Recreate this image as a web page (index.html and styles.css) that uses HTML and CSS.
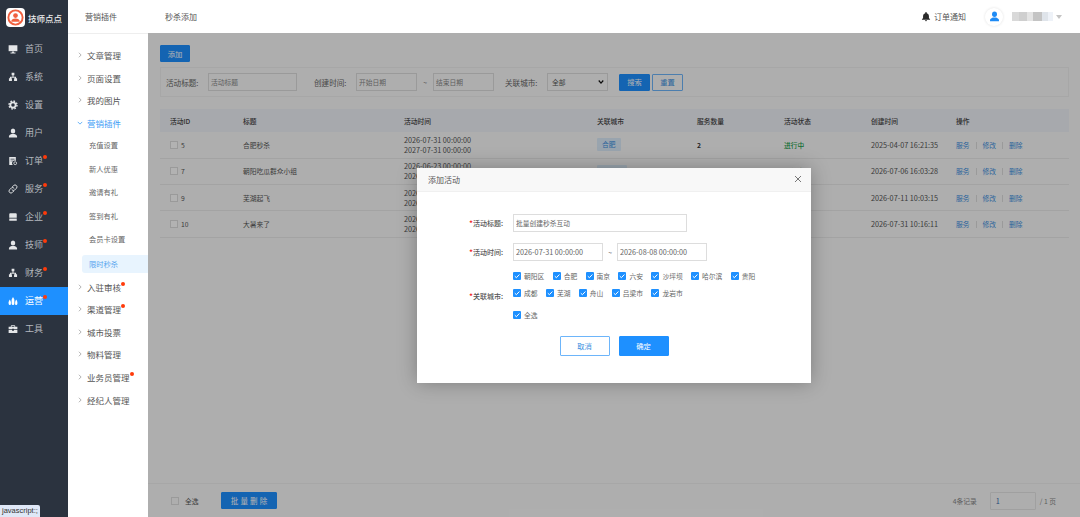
FILE: index.html
```html
<!DOCTYPE html>
<html lang="zh-CN">
<head>
  <meta charset="UTF-8" />
  <title>秒杀添加</title>
  <link rel="stylesheet" href="styles.css">
</head>
<body>
  <svg class="sprite" xmlns="http://www.w3.org/2000/svg">
    <symbol id="i-monitor" viewBox="0 0 16 16"><path d="M1 2h14v9.500H1z"/><path d="M6.500 12h3v1.500H12V15H4v-1.500h2.500z"/></symbol>
    <symbol id="i-tree" viewBox="0 0 16 16"><path d="M5.800 1h4.400v4.200H8.800v2.300h4.100V10h1.600v4.500h-4.800V10h1.500V9H4.800v1h1.500v4.500H1.500V10h1.600V7.500h4.100V5.200H5.800z"/></symbol>
    <symbol id="i-gear" viewBox="0 0 16 16"><circle cx="8" cy="8" r="4.300" fill="none" stroke="currentColor" stroke-width="3"/><circle cx="8" cy="8" r="6.400" fill="none" stroke="currentColor" stroke-width="2.200" stroke-dasharray="2.600 2.430"/></symbol>
    <symbol id="i-user" viewBox="0 0 16 16"><ellipse cx="8" cy="4.800" rx="3.600" ry="4"/><path d="M1.500 15v-1.800c0-2 3-3 4.500-3.600h4c1.500.6 4.500 1.600 4.500 3.600V15z"/></symbol>
    <symbol id="i-order" viewBox="0 0 16 16"><path d="M2 1.500h10.500v6.300a4.200 4.200 0 0 0-4.900 6.700H2z"/><path d="M4 4.500h6.500v1H4zM4 7.500h4v1H4z" fill="#2b333f"/><circle cx="11.500" cy="11.500" r="2.300" fill="none" stroke="currentColor" stroke-width="1.300"/></symbol>
    <symbol id="i-link" viewBox="0 0 16 16"><g fill="none" stroke="currentColor" stroke-width="1.500" stroke-linecap="round"><path d="M7 4.500l2-2a3 3 0 0 1 4.500 4.300l-3 3a3 3 0 0 1-4-.3"/><path d="M9 11.500l-2 2a3 3 0 0 1-4.500-4.300l3-3a3 3 0 0 1 4 .3"/></g></symbol>
    <symbol id="i-drawer" viewBox="0 0 16 16"><path d="M3.500 2h9a1.500 1.500 0 0 1 1.500 1.500V9H2V3.500A1.500 1.500 0 0 1 3.500 2z"/><path d="M2 10.500h12V14H2z"/></symbol>
    <symbol id="i-flame" viewBox="0 0 16 16"><path d="M8 1.500c1.400 2 2.200 3.500 2.200 5.500v5.500c0 1-1 2-2.200 2s-2.200-1-2.200-2V7c0-2 .8-3.500 2.200-5.500z"/><path d="M2.800 5.500C3.800 7 4.600 8.500 4.600 10v2.600c0 1-.8 1.900-1.700 1.900S1 13.500 1 12.500V10c0-1.500.8-3 1.800-4.500z"/><path d="M13.200 5.500c1 1.500 1.800 3 1.800 4.500v2.500c0 1-.9 2-1.900 2s-1.700-.9-1.700-1.900V10c0-1.500.8-3 1.800-4.500z"/></symbol>
    <symbol id="i-case" viewBox="0 0 16 16"><path d="M5.500 2h5A1 1 0 0 1 11.500 3v1.500H15V8.500H9.500v-1h-3v1H1V4.500h3.500V3a1 1 0 0 1 1-1zm.3 1.200v1.300h4.400V3.200z"/><path d="M1 9.700h5.500v1h3v-1H15V14.500H1z"/></symbol>
    <symbol id="i-bell" viewBox="0 0 16 16"><path d="M8 .8a1.200 1.200 0 0 1 1.200 1.200v.6c2.300.6 3.500 2.400 3.500 4.700v3l1.800 2.200v.5h-13v-.5l1.800-2.200v-3c0-2.300 1.200-4.100 3.500-4.700V2A1.200 1.200 0 0 1 8 .8z"/><path d="M6.300 14h3.400a1.700 1.700 0 0 1-3.400 0z"/></symbol>
    <symbol id="i-right" viewBox="0 0 8 8"><path d="M2.500 1l3 3-3 3" fill="none" stroke="currentColor" stroke-width="1"/></symbol>
    <symbol id="i-down" viewBox="0 0 8 8"><path d="M1 2.500l3 3 3-3" fill="none" stroke="currentColor" stroke-width="1"/></symbol>
    <symbol id="i-check" viewBox="0 0 8 8"><path d="M1.800 4.200l1.600 1.500 3-3.200" fill="none" stroke="#fff" stroke-width="1"/></symbol>
  </svg>

  <div class="app">
    <!-- main nav -->
    <aside class="nav">
      <div class="brand">
        <span class="brand-logo">
          <svg viewBox="0 0 20 20"><circle cx="10" cy="10" r="7.500" fill="none" stroke="#f0603f" stroke-width="2"/><circle cx="10" cy="8" r="2.500" fill="#f0603f"/><path d="M5.500 14.500c0-2.500 2-3.500 4.500-3.500s4.500 1 4.500 3.500z" fill="#f0603f"/></svg>
        </span>
        <span>技师点点</span>
      </div>
      <a class="nav-item"><svg class="nav-icon"><use href="#i-monitor"/></svg><span>首页</span></a>
      <a class="nav-item"><svg class="nav-icon"><use href="#i-tree"/></svg><span>系统</span></a>
      <a class="nav-item"><svg class="nav-icon"><use href="#i-gear"/></svg><span>设置</span></a>
      <a class="nav-item"><svg class="nav-icon"><use href="#i-user"/></svg><span>用户</span></a>
      <a class="nav-item"><svg class="nav-icon"><use href="#i-order"/></svg><span class="has-dot">订单</span></a>
      <a class="nav-item"><svg class="nav-icon"><use href="#i-link"/></svg><span class="has-dot">服务</span></a>
      <a class="nav-item"><svg class="nav-icon"><use href="#i-drawer"/></svg><span class="has-dot">企业</span></a>
      <a class="nav-item"><svg class="nav-icon"><use href="#i-user"/></svg><span class="has-dot">技师</span></a>
      <a class="nav-item"><svg class="nav-icon"><use href="#i-tree"/></svg><span class="has-dot">财务</span></a>
      <a class="nav-item active"><svg class="nav-icon"><use href="#i-flame"/></svg><span class="has-dot">运营</span></a>
      <a class="nav-item"><svg class="nav-icon"><use href="#i-case"/></svg><span>工具</span></a>
    </aside>

    <!-- second level menu -->
    <aside class="sub">
      <div class="sub-title">营销插件</div>
      <div class="sub-list">
        <a class="sub-item"><svg class="arrow"><use href="#i-right"/></svg><span>文章管理</span></a>
        <a class="sub-item"><svg class="arrow"><use href="#i-right"/></svg><span>页面设置</span></a>
        <a class="sub-item"><svg class="arrow"><use href="#i-right"/></svg><span>我的图片</span></a>
        <a class="sub-item open"><svg class="arrow"><use href="#i-down"/></svg><span>营销插件</span></a>
        <a class="sub-child">充值设置</a>
        <a class="sub-child">新人优惠</a>
        <a class="sub-child">邀请有礼</a>
        <a class="sub-child">签到有礼</a>
        <a class="sub-child">会员卡设置</a>
        <a class="sub-child current">限时秒杀</a>
        <a class="sub-item"><svg class="arrow"><use href="#i-right"/></svg><span class="has-dot">入驻审核</span></a>
        <a class="sub-item"><svg class="arrow"><use href="#i-right"/></svg><span class="has-dot">渠道管理</span></a>
        <a class="sub-item"><svg class="arrow"><use href="#i-right"/></svg><span>城市投票</span></a>
        <a class="sub-item"><svg class="arrow"><use href="#i-right"/></svg><span>物料管理</span></a>
        <a class="sub-item"><svg class="arrow"><use href="#i-right"/></svg><span class="has-dot">业务员管理</span></a>
        <a class="sub-item"><svg class="arrow"><use href="#i-right"/></svg><span>经纪人管理</span></a>
      </div>
    </aside>

    <div class="main">
      <header class="topbar">
        <div class="crumb">秒杀添加</div>
        <div class="top-right">
          <svg class="bell"><use href="#i-bell"/></svg>
          <span class="notice">订单通知</span>
          <span class="avatar"><svg><use href="#i-user"/></svg></span>
          <span class="username"></span>
          <span class="caret"></span>
        </div>
      </header>

      <div class="content">
        <div class="page">
          <button class="btn btn-add">添加</button>

          <form class="search">
            <label class="search-label">活动标题:</label>
            <input class="input input-title" placeholder="活动标题">
            <label class="search-label ml">创建时间:</label>
            <input class="input input-date" placeholder="开始日期">
            <span class="tilde">~</span>
            <input class="input input-date" placeholder="结束日期">
            <label class="search-label ml-s">关联城市:</label>
            <select class="input input-select"><option>全部</option></select>
            <button type="button" class="btn btn-search">搜索</button>
            <button type="button" class="btn btn-reset">重置</button>
          </form>

          <table class="table">
            <colgroup>
              <col class="c-id"><col class="c-title"><col class="c-time"><col class="c-city">
              <col class="c-num"><col class="c-status"><col class="c-created"><col>
            </colgroup>
            <thead>
              <tr><th>活动ID</th><th>标题</th><th>活动时间</th><th>关联城市</th><th>服务数量</th><th>活动状态</th><th>创建时间</th><th>操作</th></tr>
            </thead>
            <tbody>
              <tr>
                <td><span class="check"></span>5</td><td>合肥秒杀</td>
                <td class="date">2026-07-31 00:00:00<br>2027-07-31 00:00:00</td>
                <td><span class="tag">合肥</span></td><td class="bold">2</td><td class="green">进行中</td>
                <td class="date">2025-04-07 16:21:35</td>
                <td class="ops"><a>服务</a><i></i><a>修改</a><i></i><a>删除</a></td>
              </tr>
              <tr>
                <td><span class="check"></span>7</td><td>朝阳吃瓜群众小组</td>
                <td class="date">2026-06-23 00:00:00<br>2026-07-23 00:00:00</td>
                <td><span class="tag">朝阳区</span></td><td class="bold">1</td><td class="green">进行中</td>
                <td class="date">2026-07-06 16:03:28</td>
                <td class="ops"><a>服务</a><i></i><a>修改</a><i></i><a>删除</a></td>
              </tr>
              <tr>
                <td><span class="check"></span>9</td><td>芜湖起飞</td>
                <td class="date">2026-07-11 00:00:00<br>2026-08-11 00:00:00</td>
                <td><span class="tag">芜湖</span></td><td class="bold">1</td><td class="green">进行中</td>
                <td class="date">2026-07-11 10:03:15</td>
                <td class="ops"><a>服务</a><i></i><a>修改</a><i></i><a>删除</a></td>
              </tr>
              <tr>
                <td><span class="check"></span>10</td><td>大暑来了</td>
                <td class="date">2026-07-31 00:00:00<br>2026-08-31 00:00:00</td>
                <td><span class="tag">成都</span></td><td class="bold">1</td><td class="green">进行中</td>
                <td class="date">2026-07-31 10:16:11</td>
                <td class="ops"><a>服务</a><i></i><a>修改</a><i></i><a>删除</a></td>
              </tr>
            </tbody>
          </table>
        </div>

        <footer class="footer">
          <span class="check"></span>
          <span class="all">全选</span>
          <button class="btn btn-batch">批 量 删 除</button>
          <div class="pager">
            <span>4条记录</span>
            <input class="pager-input" value="1">
            <span>/ 1 页</span>
          </div>
        </footer>

        <!-- dialog -->
        <div class="mask">
          <div class="modal">
            <div class="modal-head">
              <span>添加活动</span>
              <svg class="close" viewBox="0 0 8 8"><path d="M1 1l6 6M7 1L1 7" stroke="#555" stroke-width=".8"/></svg>
            </div>
            <div class="modal-body">
              <div class="field">
                <label class="field-label"><b>*</b>活动标题:</label>
                <input class="box box-title" value="批量创建秒杀互动">
              </div>
              <div class="field">
                <label class="field-label"><b>*</b>活动时间:</label>
                <input class="box box-date" value="2026-07-31 00:00:00">
                <span class="tilde-m">~</span>
                <input class="box box-date" value="2026-08-08 00:00:00">
              </div>
              <div class="field field-city">
                <label class="field-label"><b>*</b>关联城市:</label>
                <div class="cities">
                  <div class="city-list">
                    <span class="city"><svg class="tick"><use href="#i-check"/></svg>朝阳区</span>
                    <span class="city"><svg class="tick"><use href="#i-check"/></svg>合肥</span>
                    <span class="city"><svg class="tick"><use href="#i-check"/></svg>南京</span>
                    <span class="city"><svg class="tick"><use href="#i-check"/></svg>六安</span>
                    <span class="city"><svg class="tick"><use href="#i-check"/></svg>沙坪坝</span>
                    <span class="city"><svg class="tick"><use href="#i-check"/></svg>哈尔滨</span>
                    <span class="city"><svg class="tick"><use href="#i-check"/></svg>贵阳</span>
                    <span class="city"><svg class="tick"><use href="#i-check"/></svg>成都</span>
                    <span class="city"><svg class="tick"><use href="#i-check"/></svg>芜湖</span>
                    <span class="city"><svg class="tick"><use href="#i-check"/></svg>舟山</span>
                    <span class="city"><svg class="tick"><use href="#i-check"/></svg>吕梁市</span>
                    <span class="city"><svg class="tick"><use href="#i-check"/></svg>龙岩市</span>
                  </div>
                  <span class="city city-all"><svg class="tick"><use href="#i-check"/></svg>全选</span>
                </div>
              </div>
              <div class="modal-actions">
                <button class="m-btn m-cancel">取消</button>
                <button class="m-btn m-ok">确定</button>
              </div>
            </div>
          </div>
        </div>
      </div>
    </div>
  </div>

  <div class="status-bubble">javascript:;</div>
</body>
</html>
```

FILE: styles.css
```css
* {
  box-sizing: border-box;
}

body {
  margin: 0;
  height: 517px;
  overflow: hidden;
  font-family: "Noto Sans CJK SC", "Liberation Sans", sans-serif;
  font-size: 6.75px;
  color: #555;
  background: #fff;
}

.sprite {
  display: none;
}

.app {
  display: flex;
  height: 517px;
}

/* main nav */
.nav {
  width: 68px;
  flex-shrink: 0;
  background: #2b333f;
  color: #b4b8be;
}

.brand {
  display: flex;
  align-items: center;
  gap: 3px;
  height: 35px;
  padding-left: 6px;
  font-size: 8.5px;
  font-weight: 500;
  color: #eee;
}

.brand-logo {
  display: flex;
  align-items: center;
  justify-content: center;
  width: 19px;
  height: 19px;
  background: #fff;
  border-radius: 4px;
}

.brand-logo svg {
  width: 19px;
  height: 19px;
}

.nav-item {
  display: flex;
  align-items: center;
  gap: 7px;
  height: 28px;
  padding: 0 0 1px 8px;
  font-size: 9px;
}

.nav-item.active {
  background: #1e90ff;
  color: #fff;
}

.nav-icon {
  width: 10px;
  height: 10px;
  fill: #e4e6e8;
  color: #e4e6e8;
}

.nav-item.active .nav-icon {
  fill: #fff;
  color: #fff;
}

.has-dot {
  position: relative;
}

.has-dot::after {
  content: "";
  position: absolute;
  top: 1px;
  right: -4px;
  width: 4px;
  height: 4px;
  border-radius: 50%;
  background: #ff3a0a;
}

/* second menu */
.sub {
  width: 80px;
  flex-shrink: 0;
  background: #fff;
  color: #555;
}

.sub-title {
  height: 34px;
  line-height: 33px;
  padding-left: 17px;
  font-size: 8px;
  border-bottom: 1px solid #eee;
}

.sub-list {
  padding-top: 10px;
}

.sub-item {
  display: flex;
  align-items: center;
  gap: 4px;
  height: 22.6px;
  padding-left: 9px;
  font-size: 8.5px;
}

.sub-item.open {
  color: #3a9bf5;
}

.arrow {
  width: 6px;
  height: 6px;
  color: #999;
}

.open .arrow {
  color: #3a9bf5;
}

.sub-child {
  display: block;
  height: 23.5px;
  line-height: 23.5px;
  padding-left: 21px;
  font-size: 7.25px;
  color: #666;
}

.sub-child.current {
  height: 18px;
  line-height: 18px;
  margin: 3px 0 2.5px 14px;
  padding-left: 7px;
  background: #e8f4fe;
  border-radius: 3px 0 0 3px;
  color: #57a5ee;
}

/* top bar */
.main {
  flex: 1;
  display: flex;
  flex-direction: column;
  min-width: 0;
}

.topbar {
  display: flex;
  align-items: center;
  justify-content: space-between;
  height: 33px;
  flex-shrink: 0;
  padding: 0 18px 0 17px;
  background: #fff;
  font-size: 8px;
  color: #555;
}

.top-right {
  display: flex;
  align-items: center;
}

.bell {
  width: 10px;
  height: 11px;
  fill: #2a2a2a;
}

.notice {
  margin: 0 19px 0 3px;
}

.avatar {
  display: flex;
  align-items: center;
  justify-content: center;
  width: 18px;
  height: 18px;
  border-radius: 50%;
  background: #fff;
  box-shadow: 0 0 3px rgba(0, 0, 0, .12);
}

.avatar svg {
  width: 11px;
  height: 11px;
  fill: #1e8bf5;
}

/* name is blurred out in the shot */
.username {
  width: 41px;
  height: 9px;
  margin: 0 3px 0 9px;
  background: linear-gradient(to right, #d9d9d9 0 18%, #cfcfcf 18% 36%, #e4e4e4 36% 50%, #c4c4c4 50% 72%, #dfe4ea 72% 88%, #eef2f8 88%);
}

.caret {
  width: 0;
  height: 0;
  border: 3px solid transparent;
  border-top: 4px solid #c4c4c4;
  border-bottom: 0;
}

/* content behind the dialog */
.content {
  position: relative;
  flex: 1;
  display: flex;
  flex-direction: column;
  min-height: 0;
  background: #fafafa;
}

.page {
  flex: 1;
  padding: 12px 11px 0 12px;
  min-height: 0;
}

.btn {
  border: 1px solid #1e90ff;
  padding: 0;
  font: inherit;
  font-size: 7.3px;
  border-radius: 1px;
  background: #1e90ff;
  color: #fff;
}

.btn-add {
  display: block;
  width: 30px;
  height: 17px;
}

.search {
  display: flex;
  align-items: center;
  height: 30px;
  margin-top: 5px;
  padding-left: 5px;
  border: 1px solid #f0f0f0;
  color: #666;
}

.search-label {
  width: 42px;
  font-size: 7.6px;
}

.ml {
  margin-left: 17px;
}

.ml-s {
  margin-left: 11px;
}

.input {
  height: 18px;
  padding: 0 2px;
  border: 1px solid #ddd;
  background: transparent;
  font: inherit;
  color: #555;
  border-radius: 0;
}

.input::placeholder {
  color: #888;
}

.input-title {
  width: 89px;
}

.input-date {
  width: 61px;
}

.tilde {
  width: 16px;
  text-align: center;
}

.input-select {
  width: 61px;
  padding-left: 4px;
  appearance: none;
  background: url("data:image/svg+xml,%3Csvg xmlns='http://www.w3.org/2000/svg' viewBox='0 0 8 8'%3E%3Cpath d='M1 2l3 3.500 3-3.500' fill='none' stroke='%23111' stroke-width='1.600'/%3E%3C/svg%3E") no-repeat right 3px center / 6px 6px;
}

.btn-search {
  width: 31px;
  height: 17px;
  margin-left: 11px;
}

.btn-reset {
  width: 31px;
  height: 17px;
  margin-left: 2px;
  background: transparent;
  border-color: #6db5fa;
  color: #3b8fe0;
}

.table {
  width: 100%;
  margin-top: 12px;
  border-collapse: collapse;
  table-layout: fixed;
}

.c-id { width: 73px; }
.c-title { width: 161px; }
.c-time { width: 193px; }
.c-city { width: 100px; }
.c-num { width: 87px; }
.c-status { width: 87px; }
.c-created { width: 85px; }

.table th {
  height: 23px;
  padding: 0 0 0 10px;
  background: #eff2f8;
  text-align: left;
  font-weight: 500;
  color: #444;
}

.table td {
  height: 26.3px;
  padding: 0 0 0 10px;
  border-bottom: 1px solid #eaeaea;
  color: #555;
  line-height: 10px;
}

.table td.date {
  font-size: 7.25px;
}

.table td.bold {
  font-weight: 700;
  color: #333;
}

.table td.green {
  color: #1a9e4b;
  font-weight: 500;
}

.check {
  display: inline-block;
  width: 8px;
  height: 8px;
  margin-right: 3px;
  border: 1px solid #ddd;
  background: #fff;
  vertical-align: -1px;
}

.tag {
  display: inline-block;
  padding: 0 5px;
  height: 13px;
  line-height: 13px;
  border-radius: 1px;
  background: #dcebfa;
  color: #3b8fe0;
}

.ops a {
  color: #3b8fe0;
}

.ops i {
  display: inline-block;
  width: 1px;
  height: 7px;
  margin: 0 6px;
  background: #ddd;
  vertical-align: -1px;
}

/* footer */
.footer {
  display: flex;
  align-items: center;
  height: 34px;
  flex-shrink: 0;
  padding: 0 24px 0 23px;
  border-top: 1px solid #f0f0f0;
}

.footer .check {
  margin-right: 6px;
  background: transparent;
}

.all {
  width: 36px;
}

.btn-batch {
  width: 56px;
  height: 17px;
  font-size: 7.5px;
  word-spacing: .5px;
}

.pager {
  display: flex;
  align-items: center;
  margin-left: auto;
  color: #888;
}

.pager-input {
  width: 46px;
  height: 18px;
  margin: 0 4px 0 13px;
  padding: 0 5px;
  border: 1px solid #e5e5e5;
  background: transparent;
  font: inherit;
  font-size: 7.25px;
  color: #3b6fb0;
  border-radius: 1px;
}

/* dialog */
.mask {
  position: absolute;
  top: 0;
  right: 0;
  bottom: 0;
  left: 0;
  display: flex;
  align-items: center;
  justify-content: center;
  background: rgba(0, 0, 0, .3);
}

.modal {
  width: 394px;
  height: 215px;
  background: #fff;
  box-shadow: 0 0 18px rgba(0, 0, 0, .28);
}

.modal-head {
  display: flex;
  align-items: center;
  justify-content: space-between;
  height: 24px;
  padding: 0 9px 0 11px;
  background: #f8f8f8;
  border-bottom: 1px solid #f0f0f0;
  font-size: 8px;
  color: #555;
}

.close {
  width: 8px;
  height: 8px;
}

.modal-body {
  padding-top: 22px;
}

.field {
  display: flex;
  align-items: center;
  margin-bottom: 11px;
}

.field-city {
  margin-bottom: 0;
}

.field-label {
  width: 86px;
  margin-right: 10px;
  text-align: right;
  font-size: 7px;
  font-weight: 500;
  color: #555;
}

.field-label b {
  color: #f02020;
}

.box {
  height: 18px;
  padding: 0 2px;
  border: 1px solid #ddd;
  font: inherit;
  color: #666;
  border-radius: 0;
}

.box-title {
  width: 174px;
}

.box-date {
  width: 90px;
  font-size: 7.25px;
}

.tilde-m {
  width: 14px;
  text-align: center;
}

.cities {
  width: 270px;
}

.city-list {
  display: flex;
  flex-wrap: wrap;
  gap: 9px 8.4px;
}

.city {
  display: inline-flex;
  align-items: center;
  gap: 3px;
  height: 8px;
  color: #666;
}

.city-all {
  margin-top: 14px;
}

.tick {
  width: 8px;
  height: 8px;
  border-radius: 1px;
  background: #1e90ff;
}

.modal-actions {
  display: flex;
  justify-content: center;
  gap: 9px;
  margin-top: 15px;
}

.m-btn {
  width: 50px;
  height: 20px;
  padding: 0;
  font: inherit;
  font-size: 7.3px;
  border: 1px solid #1e90ff;
  border-radius: 1px;
}

.m-cancel {
  background: #fff;
  border-color: #6db5fa;
  color: #3b8fe0;
}

.m-ok {
  background: #1e90ff;
  color: #fff;
}

.status-bubble {
  position: fixed;
  left: 0;
  bottom: 0;
  height: 12px;
  padding: 0 2px;
  line-height: 12px;
  font-family: "Liberation Sans", sans-serif;
  font-size: 7.5px;
  color: #333;
  background: #dfe8f7;
  border-radius: 0 2px 0 0;
}
```
